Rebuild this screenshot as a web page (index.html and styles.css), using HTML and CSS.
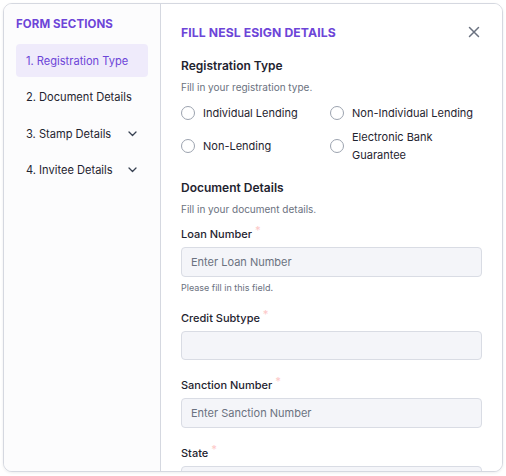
FILE: index.html
```html
<!DOCTYPE html>
<html>
<head>
<meta charset="utf-8">
<link rel="stylesheet" href="styles.css">
</head>
<body>
<div class="card">
  <aside class="sidebar">
    <div class="side-title">FORM SECTIONS</div>
    <div class="nav-item active">1. Registration Type</div>
    <div class="nav-item">2. Document Details</div>
    <div class="nav-item">3. Stamp Details
      <svg class="chev" width="9" height="6" viewBox="0 0 9 6"><path d="M1 1l3.5 3.5L8 1" fill="none" stroke="#374151" stroke-width="1.3" stroke-linecap="round" stroke-linejoin="round"/></svg>
    </div>
    <div class="nav-item">4. Invitee Details
      <svg class="chev" width="9" height="6" viewBox="0 0 9 6"><path d="M1 1l3.5 3.5L8 1" fill="none" stroke="#374151" stroke-width="1.3" stroke-linecap="round" stroke-linejoin="round"/></svg>
    </div>
  </aside>
  <main class="main">
    <div class="header">
      <div class="main-title">FILL NESL ESIGN DETAILS</div>
      <svg class="close" width="12" height="12" viewBox="0 0 12 12"><path d="M1.5 1.5l9 9M10.5 1.5l-9 9" stroke="#6b7280" stroke-width="1.5" stroke-linecap="round"/></svg>
    </div>
    <div class="sec-title">Registration Type</div>
    <div class="sec-desc">Fill in your registration type.</div>
    <div class="radios">
      <label class="radio"><span class="circle"></span><span>Individual Lending</span></label>
      <label class="radio"><span class="circle"></span><span>Non-Individual Lending</span></label>
      <label class="radio"><span class="circle"></span><span>Non-Lending</span></label>
      <label class="radio"><span class="circle"></span><span>Electronic Bank<br>Guarantee</span></label>
    </div>
    <div class="sec-title doc">Document Details</div>
    <div class="sec-desc">Fill in your document details.</div>
    <div class="field first">
      <div class="label">Loan Number <span class="req">*</span></div>
      <div class="input"><span class="ph">Enter Loan Number</span></div>
      <div class="help">Please fill in this field.</div>
    </div>
    <div class="field after-help">
      <div class="label">Credit Subtype <span class="req">*</span></div>
      <div class="input short"></div>
    </div>
    <div class="field">
      <div class="label">Sanction Number <span class="req">*</span></div>
      <div class="input"><span class="ph">Enter Sanction Number</span></div>
    </div>
    <div class="field">
      <div class="label">State <span class="req">*</span></div>
      <div class="input"></div>
    </div>
  </main>
</div>
</body>
</html>
```

FILE: styles.css
```css
* {
  box-sizing: border-box;
}
html, body {
  margin: 0;
  padding: 0;
  background: #ffffff;
}
body {
  padding: 3px 4px 5px 3px;
  font-family: Inter, "Noto Sans", sans-serif;
  color: #1f2430;
}
.card {
  width: 500px;
  height: 469px;
  border: 1px solid #d5d8e0;
  border-radius: 9px;
  display: flex;
  overflow: hidden;
  box-shadow: 0 1px 3px rgba(16, 24, 40, 0.08);
  background: #fff;
}
.sidebar {
  width: 157px;
  flex: none;
  background: #fcfcfd;
  border-right: 1px solid #d5d8e0;
  padding: 12px 12px 0 12px;
}
.side-title {
  font-size: 11.5px;
  font-weight: 700;
  color: #6d45d8;
  line-height: 16px;
  letter-spacing: 0.1px;
  margin-bottom: 12px;
}
.nav-item {
  height: 33px;
  display: flex;
  align-items: center;
  padding-left: 10px;
  padding-right: 10px;
  font-size: 11.1px;
  color: #1f2430;
  margin-bottom: 3.5px;
  border-radius: 4px;
  justify-content: space-between;
}
.nav-item.active {
  background: #efebfb;
  color: #6d45d8;
}
.chev {
  margin-right: 1px;
}
.main {
  flex: 1;
  padding: 20px 20px 0 20px;
  background: #fff;
  min-width: 0;
}
.header {
  display: flex;
  justify-content: space-between;
  align-items: center;
  height: 16px;
}
.main-title {
  font-size: 12.2px;
  font-weight: 700;
  color: #6d45d8;
  letter-spacing: 0.1px;
}
.close {
  margin-right: 2px;
}
.sec-title {
  margin-top: 17px;
  font-size: 12px;
  font-weight: 600;
  line-height: 18px;
  color: #1f2430;
}
.sec-title.doc {
  margin-top: 15px;
}
.sec-desc {
  margin-top: 5px;
  font-size: 10px;
  line-height: 14px;
  color: #6b7280;
}
.radios {
  margin-top: 10px;
  display: grid;
  grid-template-columns: 149px 1fr;
  row-gap: 6px;
  align-items: center;
}
.radio {
  display: flex;
  align-items: center;
  font-size: 11px;
  line-height: 18px;
  color: #1f2430;
}
.circle {
  width: 14px;
  height: 14px;
  border: 1px solid #9ca3af;
  border-radius: 50%;
  background: #fff;
  margin-right: 8px;
  flex: none;
}
.field {
  margin-top: 17px;
}
.field.first {
  margin-top: 10px;
}
.field.after-help {
  margin-top: 16px;
}
.label {
  font-size: 11px;
  line-height: 16px;
  font-weight: 500;
  color: #1f2430;
}
.req {
  color: #fdc9c9;
  position: relative;
  top: -4px;
  font-size: 11px;
}
.input {
  margin-top: 5px;
  height: 30px;
  border: 1px solid #d9dce4;
  border-radius: 4px;
  background: #f4f5f9;
  display: flex;
  align-items: center;
  padding-left: 9px;
}
.input.short {
  height: 29px;
}
.ph {
  font-size: 11px;
  color: #6b7280;
}
.help {
  margin-top: 5px;
  font-size: 9px;
  line-height: 12px;
  color: #6b7280;
}
```
